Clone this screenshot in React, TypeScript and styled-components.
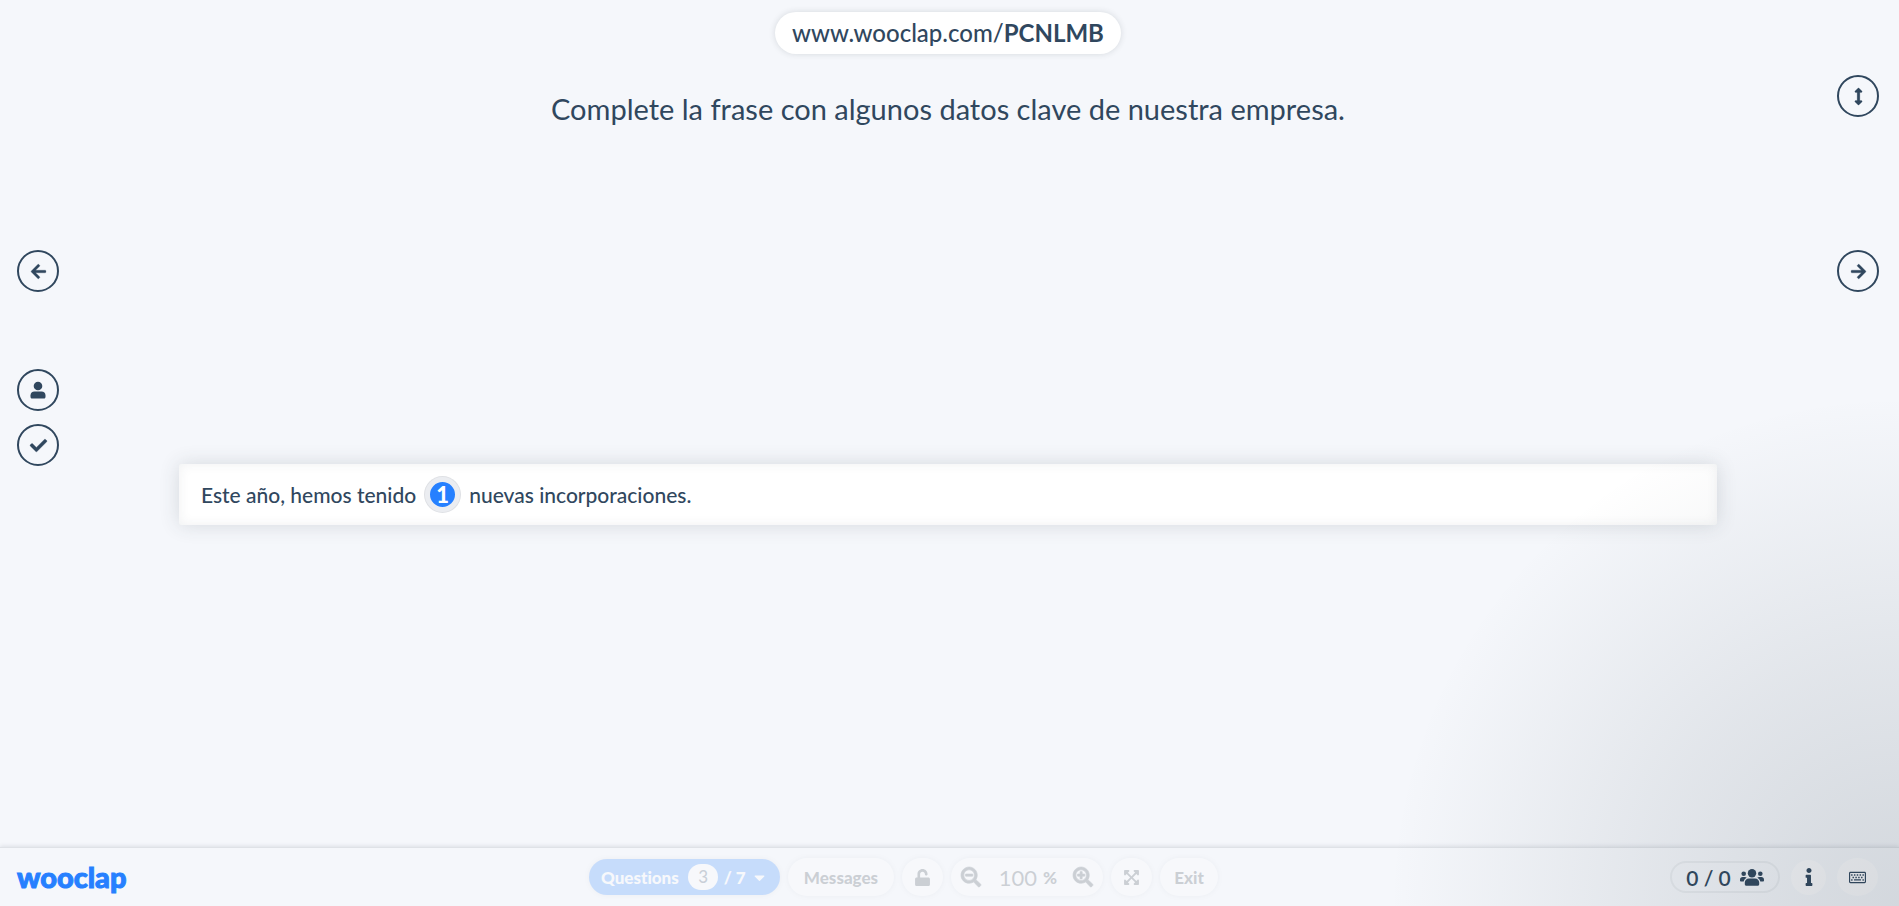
import React from "react";
import styled, { createGlobalStyle, css } from "styled-components";
import {
  FaArrowLeft,
  FaArrowRight,
  FaArrowsAltV,
  FaCaretDown,
  FaCheck,
  FaExpandArrowsAlt,
  FaInfo,
  FaRegKeyboard,
  FaSearchMinus,
  FaSearchPlus,
  FaUnlock,
} from "react-icons/fa";

const ink = "#30475e";
const blue = "#2680ff";
const surface = "#f5f7fb";

const GlobalStyle = createGlobalStyle`
  *, *::before, *::after { box-sizing: border-box; }
  body {
    margin: 0;
    background: ${surface};
    color: ${ink};
    font-family: Lato, "Open Sans", sans-serif;
    font-variant-ligatures: none;
  }
  button, input { font: inherit; font-variant-ligatures: none; color: inherit; }
`;

const Page = styled.div`
  position: relative;
  display: flex;
  flex-direction: column;
  min-height: 100vh;
  overflow: hidden;
`;

const CornerShade = styled.div`
  position: absolute;
  right: 0;
  bottom: 0;
  width: 520px;
  height: 520px;
  pointer-events: none;
  background: radial-gradient(
    circle at 100% 100%,
    rgba(45, 62, 76, 0.17) 0,
    rgba(45, 62, 76, 0.15) 80px,
    rgba(45, 62, 76, 0.095) 250px,
    rgba(45, 62, 76, 0.045) 390px,
    rgba(45, 62, 76, 0) 510px
  );
`;

const Stage = styled.main`
  flex: 1;
  display: flex;
  padding: 0 20px 0 17px;
`;

const SideNav = styled.nav<{ $top: number }>`
  display: flex;
  flex-direction: column;
  flex: none;
  padding-top: ${(p) => p.$top}px;
`;

const NavGroup = styled.div<{ $top: number }>`
  display: flex;
  flex-direction: column;
  gap: 13px;
  margin-top: ${(p) => p.$top}px;
`;

const RoundButton = styled.button`
  display: grid;
  place-items: center;
  width: 42px;
  height: 42px;
  padding: 0;
  border: 2px solid ${ink};
  border-radius: 50%;
  background: transparent;
  font-size: 17px;

  svg[viewBox$="512"] {
    overflow: visible;
    stroke: currentColor;
    stroke-width: 8px;
    stroke-linejoin: round;
  }
`;

const Center = styled.section`
  flex: 1;
  display: flex;
  flex-direction: column;
  align-items: center;
  padding: 12px 120px 0;
`;

const JoinLink = styled.a`
  padding: 0 17px;
  border-radius: 21px;
  background: #fff;
  box-shadow: 0 0 6px rgba(48, 60, 70, 0.16);
  color: ${ink};
  font-size: 24px;
  font-weight: 500;
  line-height: 42px;
  text-decoration: none;
  white-space: nowrap;

  strong { font-weight: 700; }
`;

const Title = styled.h1`
  margin: 22px 0 0;
  font-size: 29px;
  font-weight: 400;
  line-height: 66px;
  white-space: nowrap;
`;

const CardArea = styled.div`
  flex: 1;
  align-self: stretch;
  display: flex;
  align-items: center;
`;

const Card = styled.p`
  flex: 1;
  display: flex;
  align-items: center;
  min-height: 61px;
  margin: 0;
  padding: 0 22px;
  border-radius: 2px;
  background: #fff;
  box-shadow: 0 0 20px rgba(48, 60, 70, 0.16), inset 0 0 12px rgba(48, 60, 70, 0.07);
  font-size: 21px;
  font-weight: 500;
`;

const Blank = styled.span`
  display: grid;
  place-items: center;
  width: 35px;
  height: 35px;
  margin: 0 9px;
  border: 5px solid #ebedf1;
  border-radius: 50%;
  background: ${blue};
  box-shadow: 0 0 0 1px #dfe1e5;
  color: #fff;
  font-size: 22px;
  font-weight: 900;
  line-height: 25px;
`;

const Footer = styled.footer`
  display: flex;
  justify-content: space-between;
  align-items: center;
  height: 59px;
  padding: 0 21px 0 17px;
  border-top: 1px solid #dfe2e7;
  box-shadow: 0 -1px 4px rgba(48, 60, 70, 0.12);
`;

const Logo = styled.a`
  width: 120px;
  color: ${blue};
  font-size: 29px;
  font-weight: 900;
  line-height: 32px;
  text-decoration: none;
  -webkit-text-stroke: 1px ${blue};
`;

const Toolbar = styled.div`
  display: flex;
  align-items: center;
  gap: 8px;
  opacity: 0.22;
`;

const pill = css`
  display: flex;
  align-items: center;
  justify-content: center;
  border: 0;
  border-radius: 20px;
  background: #fff;
  box-shadow: 0 0 4px rgba(48, 60, 70, 0.2);
  color: #3c4650;
  font-size: 17px;
  font-weight: 900;
  white-space: nowrap;
`;

const ToolButton = styled.button<{ $width?: number }>`
  ${pill}
  width: ${(p) => p.$width ?? 41}px;
  height: 38px;
  padding: 0;
`;

const QuestionsButton = styled.button`
  ${pill}
  justify-content: space-between;
  width: 191px;
  height: 36px;
  padding: 0 12px;
  background: ${blue};
  color: #fff;
`;

const Current = styled.span`
  width: 30px;
  margin-left: 4px;
  border-radius: 13px;
  background: #fff;
  color: ${ink};
  font-weight: 500;
  line-height: 26px;
`;

const ZoomGroup = styled.div`
  ${pill}
  justify-content: space-between;
  width: 152px;
  height: 38px;
  padding: 0 10px;

  label { display: flex; align-items: center; gap: 6px; }
`;

const ZoomInput = styled.input`
  width: 40px;
  padding: 0;
  border: 0;
  background: transparent;
  font-size: 22px;
  font-weight: 400;
  text-align: right;
`;

const IconButton = styled.button`
  display: grid;
  place-items: center;
  padding: 0;
  border: 0;
  background: transparent;
  font-size: 20px;

  svg { stroke: currentColor; stroke-width: 16px; overflow: visible; }
`;

const Status = styled.div`
  display: flex;
  align-items: center;
  gap: 11px;
`;

const Participants = styled.div`
  display: flex;
  align-items: center;
  justify-content: center;
  gap: 9px;
  width: 110px;
  height: 32px;
  border: 2px solid rgba(48, 60, 70, 0.06);
  border-radius: 16px;
  font-size: 21px;
  font-weight: 600;
`;

const StatusButton = styled.button<{ $wide?: boolean }>`
  display: grid;
  place-items: center;
  width: ${(p) => (p.$wide ? 41 : 35)}px;
  height: ${(p) => (p.$wide ? 38 : 35)}px;
  padding: 0;
  border: 0;
  border-radius: 50%;
  background: rgba(255, 255, 255, 0.55);
  font-size: ${(p) => (p.$wide ? 17 : 18)}px;
`;

function UserIcon() {
  return (
    <svg width="16" height="18" viewBox="0 0 16 18" fill="currentColor" aria-hidden="true">
      <circle cx="8" cy="5" r="4.3" />
      <path d="M4.5 10.5h7c2.400 0 4 1.600 4 3.900v1.600c0 .8-.6 1.500-1.500 1.500H2c-.9 0-1.500-.7-1.500-1.500v-1.600c0-2.300 1.600-3.900 4-3.900z" />
    </svg>
  );
}

function UsersIcon() {
  return (
    <svg width="24" height="17" viewBox="0 0 24 17" fill="currentColor" aria-hidden="true">
      <circle cx="12" cy="4.300" r="4.200" />
      <circle cx="3.700" cy="4.800" r="2.300" />
      <circle cx="20.300" cy="4.800" r="2.300" />
      <path d="M9 9.600h6c2.500 0 4.200 1.700 4.200 4v1.700c0 .9-.7 1.500-1.500 1.500H6.300c-.8 0-1.500-.6-1.500-1.500v-1.700c0-2.300 1.700-4 4.200-4z" />
      <path d="M2.600 8.100h2.200c.8 0 1.400.2 1.900.7-1.600.8-2.600 2-3 3.800H1.200c-.7 0-1.200-.5-1.200-1.200v-.7c0-1.500 1.100-2.600 2.600-2.600zM21.400 8.100h-2.200c-.8 0-1.400.2-1.900.7 1.600.8 2.600 2 3 3.800h2.500c.7 0 1.200-.5 1.200-1.200v-.7c0-1.500-1.100-2.600-2.600-2.600z" />
    </svg>
  );
}

export default function App() {
  return (
    <>
      <GlobalStyle />
      <Page>
        <Stage>
          <SideNav $top={250} aria-label="Previous">
            <RoundButton aria-label="Previous question"><FaArrowLeft /></RoundButton>
            <NavGroup $top={77}>
              <RoundButton aria-label="Show participants"><UserIcon /></RoundButton>
              <RoundButton aria-label="Show correct answer"><FaCheck /></RoundButton>
            </NavGroup>
          </SideNav>
          <Center>
            <JoinLink href="#join">www.wooclap.com/<strong>PCNLMB</strong></JoinLink>
            <Title>Complete la frase con algunos datos clave de nuestra empresa.</Title>
            <CardArea>
              <Card>
                Este año, hemos tenido <Blank>1</Blank> nuevas incorporaciones.
              </Card>
            </CardArea>
          </Center>
          <SideNav $top={75} aria-label="Next">
            <RoundButton aria-label="Resize"><FaArrowsAltV /></RoundButton>
            <NavGroup $top={133}>
              <RoundButton aria-label="Next question"><FaArrowRight /></RoundButton>
            </NavGroup>
          </SideNav>
        </Stage>
        <Footer>
          <Logo href="#home">wooclap</Logo>
          <Toolbar>
            <QuestionsButton>
              Questions <Current>3</Current> <span>/ 7</span> <FaCaretDown />
            </QuestionsButton>
            <ToolButton $width={106}>Messages</ToolButton>
            <ToolButton aria-label="Lock votes"><FaUnlock /></ToolButton>
            <ZoomGroup>
              <IconButton aria-label="Zoom out"><FaSearchMinus /></IconButton>
              <label><ZoomInput aria-label="Zoom" defaultValue="100" />%</label>
              <IconButton aria-label="Zoom in"><FaSearchPlus /></IconButton>
            </ZoomGroup>
            <ToolButton aria-label="Full screen"><FaExpandArrowsAlt /></ToolButton>
            <ToolButton $width={58}>Exit</ToolButton>
          </Toolbar>
          <Status>
            <Participants>0 / 0 <UsersIcon /></Participants>
            <StatusButton aria-label="Information"><FaInfo /></StatusButton>
            <StatusButton $wide aria-label="Keyboard shortcuts"><FaRegKeyboard /></StatusButton>
          </Status>
        </Footer>
        <CornerShade />
      </Page>
    </>
  );
}
